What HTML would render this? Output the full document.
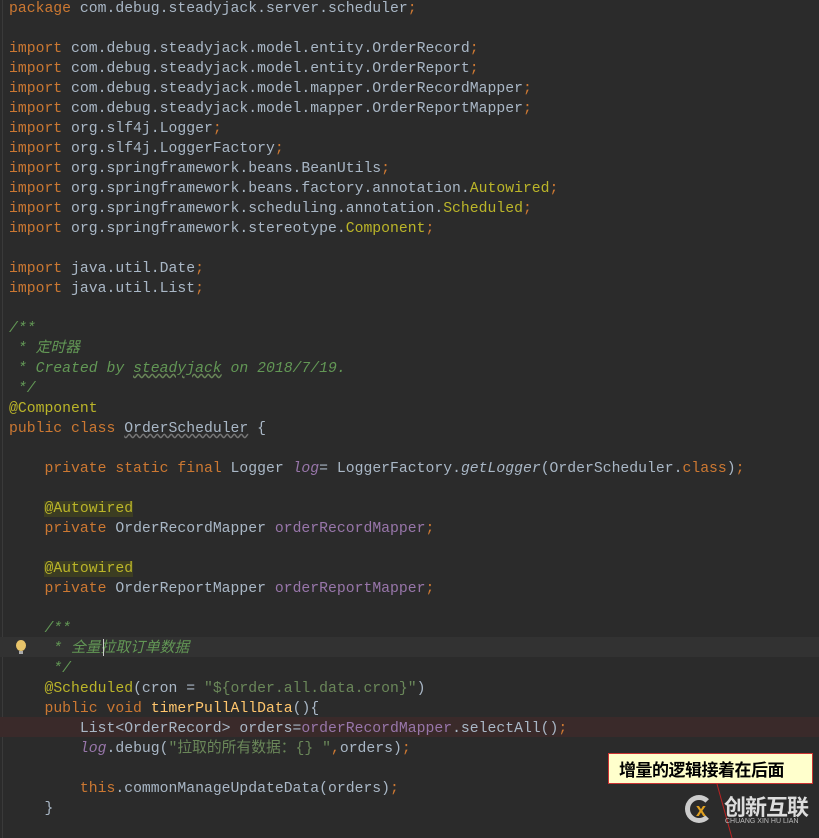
<!DOCTYPE html>
<html><head><meta charset="utf-8"><style>
html,body{margin:0;padding:0;}
body{width:819px;height:838px;background:#2b2b2b;overflow:hidden;position:relative;font-family:"Liberation Mono","Noto Sans CJK SC",monospace;font-size:14.77px;color:#a9b7c6;}
.l{position:absolute;left:9px;height:20px;line-height:20px;white-space:pre;margin-top:1px;}
.k{color:#cc7832}.a{color:#bbb529}.f{color:#9876aa}.c{color:#808080}.d{color:#629755;font-style:italic}.s{color:#6a8759}.i{font-style:italic}
.ab{background:#3c3d22}
.u{text-decoration:underline wavy #6a8759;}
.hl{position:absolute;left:0;width:819px;height:20px;}
</style></head><body>
<div style="position:absolute;left:2px;top:0;width:1px;height:838px;background:#3a3a3a"></div>
<div class="hl" style="top:637px;background:#323232"></div>
<div class="hl" style="top:717px;background:#3a2a2a"></div>
<div class="l" style="top:-2px"><span class="k">package</span> com.debug.steadyjack.server.scheduler<span class="k">;</span></div>
<div class="l" style="top:38px"><span class="k">import</span> com.debug.steadyjack.model.entity.OrderRecord<span class="k">;</span></div>
<div class="l" style="top:58px"><span class="k">import</span> com.debug.steadyjack.model.entity.OrderReport<span class="k">;</span></div>
<div class="l" style="top:78px"><span class="k">import</span> com.debug.steadyjack.model.mapper.OrderRecordMapper<span class="k">;</span></div>
<div class="l" style="top:98px"><span class="k">import</span> com.debug.steadyjack.model.mapper.OrderReportMapper<span class="k">;</span></div>
<div class="l" style="top:118px"><span class="k">import</span> org.slf4j.Logger<span class="k">;</span></div>
<div class="l" style="top:138px"><span class="k">import</span> org.slf4j.LoggerFactory<span class="k">;</span></div>
<div class="l" style="top:158px"><span class="k">import</span> org.springframework.beans.BeanUtils<span class="k">;</span></div>
<div class="l" style="top:178px"><span class="k">import</span> org.springframework.beans.factory.annotation.<span class="a">Autowired</span><span class="k">;</span></div>
<div class="l" style="top:198px"><span class="k">import</span> org.springframework.scheduling.annotation.<span class="a">Scheduled</span><span class="k">;</span></div>
<div class="l" style="top:218px"><span class="k">import</span> org.springframework.stereotype.<span class="a">Component</span><span class="k">;</span></div>
<div class="l" style="top:258px"><span class="k">import</span> java.util.Date<span class="k">;</span></div>
<div class="l" style="top:278px"><span class="k">import</span> java.util.List<span class="k">;</span></div>
<div class="l d" style="top:318px">/**</div>
<div class="l d" style="top:338px"> * 定时器</div>
<div class="l d" style="top:358px"> * Created by <span class="u">steadyjack</span> on 2018/7/19.</div>
<div class="l d" style="top:378px"> */</div>
<div class="l" style="top:398px"><span class="a">@Component</span></div>
<div class="l" style="top:418px"><span class="k">public class</span> <span style="text-decoration:underline wavy #777">OrderScheduler</span> {</div>
<div class="l" style="top:458px">    <span class="k">private static final</span> Logger <span class="f i">log</span>= LoggerFactory.<span class="i">getLogger</span>(OrderScheduler.<span class="k">class</span>)<span class="k">;</span></div>
<div class="l" style="top:498px">    <span class="a ab">@Autowired</span></div>
<div class="l" style="top:518px">    <span class="k">private</span> OrderRecordMapper <span class="f">orderRecordMapper</span><span class="k">;</span></div>
<div class="l" style="top:558px">    <span class="a ab">@Autowired</span></div>
<div class="l" style="top:578px">    <span class="k">private</span> OrderReportMapper <span class="f">orderReportMapper</span><span class="k">;</span></div>
<div class="l d" style="top:618px">    /**</div>
<div class="l d" style="top:638px">     * 全量拉取订单数据</div>
<div class="l d" style="top:658px">     */</div>
<div class="l" style="top:678px">    <span class="a">@Scheduled</span>(cron = <span class="s">"${order.all.data.cron}"</span>)</div>
<div class="l" style="top:698px">    <span class="k">public void</span> <span style="color:#ffc66d">timerPullAllData</span>(){</div>
<div class="l" style="top:718px">        List&lt;OrderRecord&gt; orders=<span class="f">orderRecordMapper</span>.selectAll()<span class="k">;</span></div>
<div class="l" style="top:738px">        <span class="f i">log</span>.debug(<span class="s">"拉取的所有数据：{} "</span><span class="k">,</span>orders)<span class="k">;</span></div>
<div class="l" style="top:778px">        <span class="k">this</span>.commonManageUpdateData(orders)<span class="k">;</span></div>
<div class="l" style="top:798px">    }</div>
<div style="position:absolute;left:103px;top:639px;width:1px;height:17px;background:#ccc"></div>
<div style="position:absolute;left:16px;top:640px;width:10px;height:11px;border-radius:50%;background:#e8c46a"></div>
<div style="position:absolute;left:19px;top:651px;width:4px;height:3px;background:#aaa"></div>
<svg style="position:absolute;left:0;top:0" width="819" height="838"><line x1="717" y1="784" x2="732" y2="838" stroke="#b22" stroke-width="1"/></svg>
<div style="position:absolute;left:608px;top:753px;width:205px;height:31px;background:#ffffcc;border:1px solid #c33;box-sizing:border-box;font-family:'Noto Sans CJK SC',sans-serif;font-weight:bold;color:#000;font-size:17px;line-height:29px;padding-left:10px;letter-spacing:-0.5px">增量的逻辑接着在后面</div>
<div style="position:absolute;left:685px;top:795px;width:28px;height:28px;border:5px solid #ccc;border-right-color:transparent;border-radius:50%;box-sizing:border-box"></div>
<div style="position:absolute;left:696px;top:800px;color:#e0a020;font:bold 18px 'Liberation Sans',sans-serif">x</div>
<div style="position:absolute;left:724px;top:793px;color:#ddd;font:bold 22px 'Noto Sans CJK SC',sans-serif;line-height:26px;letter-spacing:-1px">创新互联</div>
<div style="position:absolute;left:725px;top:818px;color:#bbb;font:7px 'Liberation Sans',sans-serif">CHUANG XIN HU LIAN</div>
</body></html>
